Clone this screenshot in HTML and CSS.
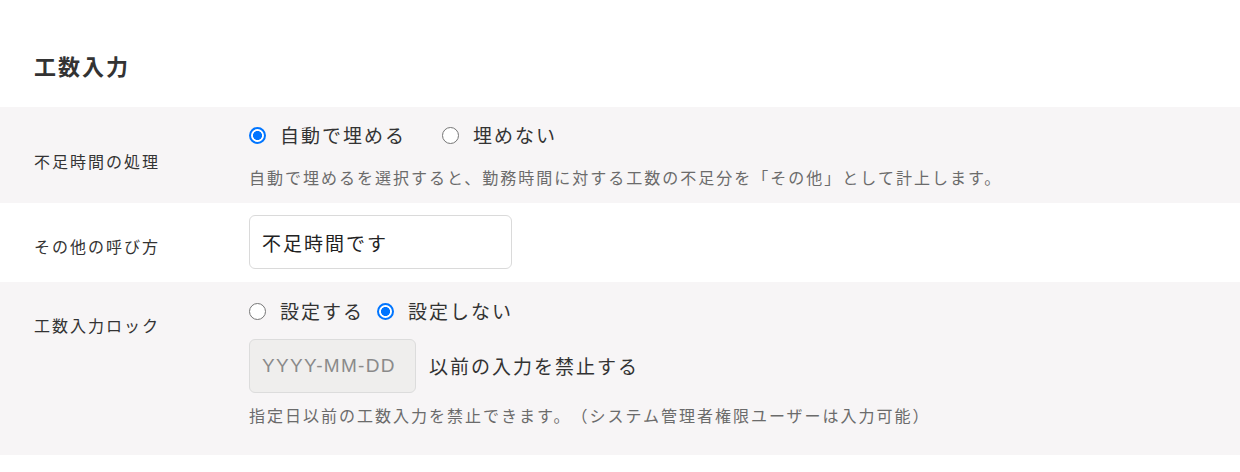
FILE: index.html
```html
<!DOCTYPE html>
<html lang="ja">
<head>
<meta charset="utf-8">
<title>工数入力</title>
<link rel="stylesheet" href="styles.css">
</head>
<body>
<div class="page">
  <h1 class="title">工数入力</h1>

  <div class="row row-gray">
    <div class="label label-mid">不足時間の処理</div>
    <div class="content">
      <div class="radios">
        <label class="opt opt-wide"><input type="radio" name="fill" checked><span>自動で埋める</span></label>
        <label class="opt"><input type="radio" name="fill"><span>埋めない</span></label>
      </div>
      <p class="help help-1">自動で埋めるを選択すると、勤務時間に対する工数の不足分を「その他」として計上します。</p>
    </div>
  </div>

  <div class="row row-white">
    <div class="label">その他の呼び方</div>
    <div class="content content-input">
      <input class="text-input" type="text" value="不足時間です">
    </div>
  </div>

  <div class="row row-gray">
    <div class="label">工数入力ロック</div>
    <div class="content content-lock">
      <div class="radios">
        <label class="opt"><input type="radio" name="lock"><span>設定する</span></label>
        <label class="opt"><input type="radio" name="lock" checked><span>設定しない</span></label>
      </div>
      <div class="date-line">
        <input class="date-input" type="text" placeholder="YYYY-MM-DD" disabled>
        <span class="date-text">以前の入力を禁止する</span>
      </div>
      <p class="help help-3">指定日以前の工数入力を禁止できます。（システム管理者権限ユーザーは入力可能）</p>
    </div>
  </div>
</div>
</body>
</html>
```

FILE: styles.css
```css
* { box-sizing: border-box; }

html, body {
  margin: 0;
  padding: 0;
  background: #ffffff;
}

body {
  font-family: "Noto Sans CJK JP", "Liberation Sans", sans-serif;
  color: #333333;
  text-spacing-trim: space-all;
}

.page {
  width: 1240px;
}

.title {
  margin: 0;
  padding: 50px 0 27px 34px;
  font-size: 22px;
  line-height: 30px;
  font-weight: 700;
  letter-spacing: 2px;
  color: #333333;
}

.row {
  display: grid;
  grid-template-columns: 249px 1fr;
}

.row-gray { background: #f7f5f6; }
.row-white { background: #ffffff; }

.label {
  padding: 31px 0 0 34px;
  font-size: 16px;
  line-height: 24px;
  letter-spacing: 2px;
  color: #333333;
}

.label-mid { padding-top: 42px; }

.content {
  padding: 12px 0 14px 0;
}

.content-input {
  padding: 12px 0 13px 0;
}

.content-lock {
  padding: 13px 0 28px 0;
}

.radios {
  display: flex;
  align-items: center;
  height: 32px;
}

.opt {
  display: flex;
  align-items: center;
  font-size: 19px;
  letter-spacing: 2px;
  line-height: 32px;
  color: #333333;
  margin-right: 13px;
}

.opt-wide { margin-right: 36px; }

.opt input {
  appearance: none;
  -webkit-appearance: none;
  width: 17px;
  height: 17px;
  margin: 0 14px 0 0;
  border: 1.5px solid #767676;
  border-radius: 50%;
  background: #ffffff;
  flex: none;
}

.opt input:checked {
  border: 2px solid #0075ff;
  background: radial-gradient(circle, #0075ff 0 4.2px, #ffffff 4.8px);
}

.help {
  margin: 0;
  font-size: 16px;
  line-height: 24px;
  letter-spacing: 2px;
  color: #6b6b6b;
}

.help-1 { margin-top: 14px; }
.help-3 { margin-top: 10px; }

.text-input {
  display: block;
  width: 263px;
  height: 54px;
  margin: 0;
  padding: 0 12px;
  border: 1px solid #dadada;
  border-radius: 6px;
  background: #ffffff;
  font-family: "Noto Sans CJK JP", "Liberation Sans", sans-serif;
  font-size: 19px;
  letter-spacing: 2px;
  color: #222222;
  outline: none;
}

.date-line {
  display: flex;
  align-items: center;
  margin-top: 12px;
}

.date-input {
  display: block;
  width: 167px;
  height: 54px;
  margin: 0 13px 0 0;
  padding: 0 12px;
  border: 1px solid #dcdcdc;
  border-radius: 6px;
  background: #efeeed;
  font-family: "Liberation Sans", "Noto Sans CJK JP", sans-serif;
  font-size: 19px;
  letter-spacing: 1.3px;
  color: #888888;
}

.date-input::placeholder {
  color: #8a8a8a;
  opacity: 1;
}

.date-text {
  font-size: 19px;
  line-height: 32px;
  letter-spacing: 2px;
  color: #333333;
}
```
